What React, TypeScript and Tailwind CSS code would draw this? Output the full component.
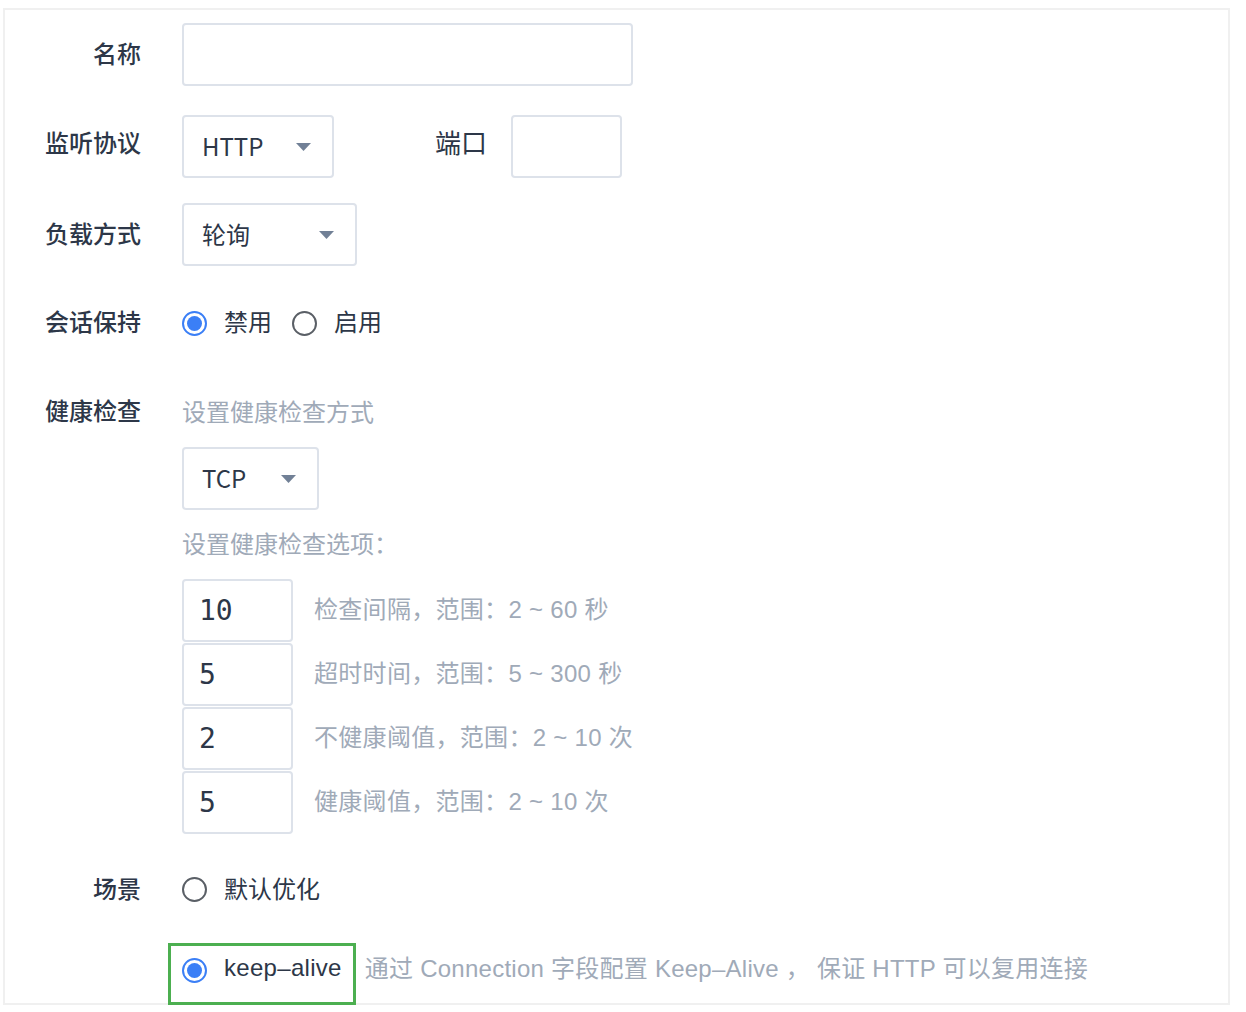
import React from "react";

const font = { fontFamily: '"Noto Sans CJK SC", "Noto Sans", sans-serif' };
const latin = { fontFamily: '"Liberation Sans", "Noto Sans CJK SC", sans-serif' };

const Label = ({ children, lift = "pb-[4px]" }: { children: React.ReactNode; lift?: string }) => (
	<div className={`w-[136px] shrink-0 text-right text-[24px] font-medium text-[#2d3748] ${lift}`}>{children}</div>
);

const Caret = () => (
	<svg width="15" height="8" viewBox="0 0 15 8" className="shrink-0">
		<path d="M0 0h15L7.5 8z" fill="#718096" />
	</svg>
);

const Select = ({ value, width }: { value: string; width: string }) => (
	<div className={`flex h-[63px] ${width} items-center justify-between rounded-[4px] border-2 border-[#dde2ea] pl-[18px] pr-[21px] text-[24px] text-[#2d3748]`}>
		<span className="pb-[2px]">{value}</span>
		<Caret />
	</div>
);

const Dot = ({ checked }: { checked?: boolean }) =>
	checked ? (
		<span className="flex h-[25px] w-[25px] shrink-0 items-center justify-center rounded-full border-2 border-[#3b7ff6]">
			<span className="h-[15px] w-[15px] rounded-full bg-[#3b7ff6]" />
		</span>
	) : (
		<span className="h-[25px] w-[25px] shrink-0 rounded-full border-2 border-[#5a5f66]" />
	);

const Radio = ({ checked, label }: { checked?: boolean; label: string }) => (
	<div className="flex items-center gap-[17px]">
		<Dot checked={checked} />
		<span className="pb-[4px] text-[24px] text-[#2d3748]">{label}</span>
	</div>
);

const options = [
	{ value: "10", hint: "检查间隔，范围：2 ~ 60 秒" },
	{ value: "5", hint: "超时时间，范围：5 ~ 300 秒" },
	{ value: "2", hint: "不健康阈值，范围：2 ~ 10 次" },
	{ value: "5", hint: "健康阈值，范围：2 ~ 10 次" },
];

export default function App() {
	return (
		<div className="min-h-screen bg-white pl-[3px] pt-[8px]" style={font}>
			<div className="w-[1227px] border-2 border-[#f0f0f0]">
				{/* 名称 */}
				<div className="mt-[13px] flex h-[63px] items-center">
					<Label>名称</Label>
					<div className="ml-[41px] h-[63px] w-[451px] rounded-[4px] border-2 border-[#dde2ea]" />
				</div>

				{/* 监听协议 + 端口 */}
				<div className="mt-[29px] flex h-[63px] items-center">
					<Label lift="pb-[10px]">监听协议</Label>
					<div className="ml-[41px]">
						<Select value="HTTP" width="w-[152px]" />
					</div>
					<span className="ml-[101px] pb-[10px] text-[26px] text-[#2d3748]">端口</span>
					<div className="ml-[24px] h-[63px] w-[111px] rounded-[4px] border-2 border-[#dde2ea]" />
				</div>

				{/* 负载方式 */}
				<div className="mt-[25px] flex h-[63px] items-center">
					<Label>负载方式</Label>
					<div className="ml-[41px]">
						<Select value="轮询" width="w-[175px]" />
					</div>
				</div>

				{/* 会话保持 */}
				<div className="mt-[25px] flex h-[63px] items-center">
					<Label lift="pb-[3px]">会话保持</Label>
					<div className="ml-[41px] flex items-center gap-[20px] pt-[1px]">
						<Radio checked label="禁用" />
						<Radio label="启用" />
					</div>
				</div>

				{/* 健康检查 */}
				<div className="mt-[38px] flex">
					<div className="flex h-[40px] items-center">
						<Label>健康检查</Label>
					</div>
					<div className="ml-[41px] flex flex-col">
						<div className="flex h-[40px] items-center pb-[2px] text-[24px] text-[#a0aab8]">设置健康检查方式</div>
						<div className="mt-[15px]">
							<Select value="TCP" width="w-[137px]" />
						</div>
						<div className="mt-[14px] flex h-[40px] items-center pb-[2px] text-[24px] text-[#a0aab8]">设置健康检查选项：</div>
						<div className="mt-[15px] flex flex-col gap-[1px]">
							{options.map((o, i) => (
								<div key={i} className="flex items-center">
									<div
										className="flex h-[63px] w-[111px] items-center rounded-[4px] border-2 border-[#dde2ea] pl-[15px] text-[28px] text-[#2d3748]"
										style={{ fontFamily: '"DejaVu Sans Mono", monospace' }}
									>
										{o.value}
									</div>
									<span className="ml-[21px] pb-[2px] text-[24px] tracking-[0.3px] text-[#a0aab8]" style={latin}>
										{o.hint}
									</span>
								</div>
							))}
						</div>
					</div>
				</div>

				{/* 场景 */}
				<div className="mt-[24px] flex h-[63px] items-center">
					<Label lift="pb-[3px]">场景</Label>
					<div className="ml-[41px]">
						<Radio label="默认优化" />
					</div>
				</div>

				<div className="relative z-10 -mb-[2px] mt-[22px] flex h-[62px] items-center pl-[163px]">
					<div className="flex h-[62px] items-center border-[3px] border-[#4caf50] pb-[8px] pl-[11px] pr-[11px]">
						<div className="flex items-center gap-[17px]">
							<Dot checked />
							<span className="pb-[4px] text-[24px] tracking-[0.3px] text-[#2d3748]" style={latin}>
								keep–alive
							</span>
						</div>
					</div>
					<span className="ml-[9px] pb-[10px] text-[24px] tracking-[0.25px] text-[#a0aab8]" style={latin}>
						通过 Connection 字段配置 Keep–Alive ， 保证 HTTP 可以复用连接
					</span>
				</div>
			</div>
		</div>
	);
}
